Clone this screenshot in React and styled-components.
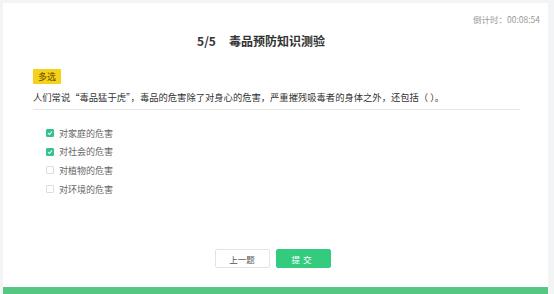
import React, { useState } from "react";
import styled, { createGlobalStyle } from "styled-components";

const GlobalStyle = createGlobalStyle`
  html, body {
    margin: 0;
    padding: 0;
    background: #f2f4f6;
    font-family: "Noto Sans CJK SC", "Microsoft YaHei", sans-serif;
  }
`;

const Page = styled.div`
  height: 294px;
  padding: 3px 6px 0 3px;
  box-sizing: border-box;
  display: flex;
`;

const Card = styled.div`
  flex: 1;
  background: #ffffff;
  display: flex;
  flex-direction: column;
`;

const TimerRow = styled.div`
  display: flex;
  justify-content: flex-end;
  padding: 10px 8px 0 0;
  font-size: 8.5px;
  line-height: 12px;
  color: #999999;
`;

const Title = styled.h1`
  margin: 7px 0 0;
  padding-right: 29px;
  text-align: center;
  font-size: 12px;
  line-height: 18px;
  font-weight: bold;
  color: #333333;
  display: flex;
  justify-content: center;
  gap: 13px;
`;

const Body = styled.div`
  flex: 1;
  padding: 0 28px 0 30px;
  display: flex;
  flex-direction: column;
`;

const Tag = styled.span`
  align-self: flex-start;
  margin-top: 19px;
  background: #f7d117;
  color: #5a4a00;
  font-size: 9px;
  line-height: 15px;
  padding: 0 5px;
  border-radius: 1px;
`;

const Question = styled.div`
  margin-top: 7px;
  font-size: 9.3px;
  line-height: 12px;
  color: #333333;
  padding-bottom: 6px;
  border-bottom: 1px solid #e6e6e6;
`;

const Options = styled.div`
  margin-top: 17px;
  padding-left: 13px;
  display: flex;
  flex-direction: column;
  gap: 6.7px;
`;

const Option = styled.label`
  display: flex;
  align-items: center;
  gap: 5px;
  height: 12px;
  font-size: 9px;
  color: #666666;
  cursor: pointer;
`;

const Box = styled.span`
  width: 8px;
  height: 8px;
  border-radius: 1px;
  box-sizing: border-box;
  border: 1px solid ${(p) => (p.checked ? "#34c38f" : "#dddddd")};
  background: ${(p) => (p.checked ? "#34c38f" : "#ffffff")};
  display: flex;
  align-items: center;
  justify-content: center;
`;

const Actions = styled.div`
  margin-top: auto;
  margin-bottom: 19px;
  display: flex;
  justify-content: center;
  gap: 6px;
  padding-right: 8px;
`;

const Button = styled.button`
  width: 55px;
  height: 19px;
  border-radius: 2px;
  font-family: inherit;
  font-size: 8.5px;
  cursor: pointer;
  border: 1px solid ${(p) => (p.primary ? "#33cc7f" : "#e3e3e3")};
  background: ${(p) => (p.primary ? "#33cc7f" : "#ffffff")};
  color: ${(p) => (p.primary ? "#ffffff" : "#555555")};
  letter-spacing: ${(p) => (p.primary ? "3px" : "0")};
`;

const Bar = styled.div`
  height: 7px;
  background: #55c783;
`;

const Check = () => (
  <svg width="6" height="6" viewBox="0 0 6 6">
    <path d="M1 3.1 L2.5 4.5 L5 1.5" fill="none" stroke="#fff" strokeWidth="1.1" />
  </svg>
);

const options = [
  { label: "对家庭的危害", checked: true },
  { label: "对社会的危害", checked: true },
  { label: "对植物的危害", checked: false },
  { label: "对环境的危害", checked: false },
];

export default function App() {
  const [sel, setSel] = useState(options.map((o) => o.checked));
  return (
    <>
      <GlobalStyle />
      <Page>
        <Card>
          <TimerRow>倒计时：00:08:54</TimerRow>
          <Title>
            <span>5/5</span>
            <span>毒品预防知识测验</span>
          </Title>
          <Body>
            <Tag>多选</Tag>
            <Question>
              人们常说“毒品猛于虎”，毒品的危害除了对身心的危害，严重摧残吸毒者的身体之外，还包括（ ）。
            </Question>
            <Options>
              {options.map((o, i) => (
                <Option
                  key={o.label}
                  onClick={() => setSel(sel.map((s, j) => (j === i ? !s : s)))}
                >
                  <Box checked={sel[i]}>{sel[i] && <Check />}</Box>
                  {o.label}
                </Option>
              ))}
            </Options>
            <Actions>
              <Button>上一题</Button>
              <Button primary>提交</Button>
            </Actions>
          </Body>
          <Bar />
        </Card>
      </Page>
    </>
  );
}
